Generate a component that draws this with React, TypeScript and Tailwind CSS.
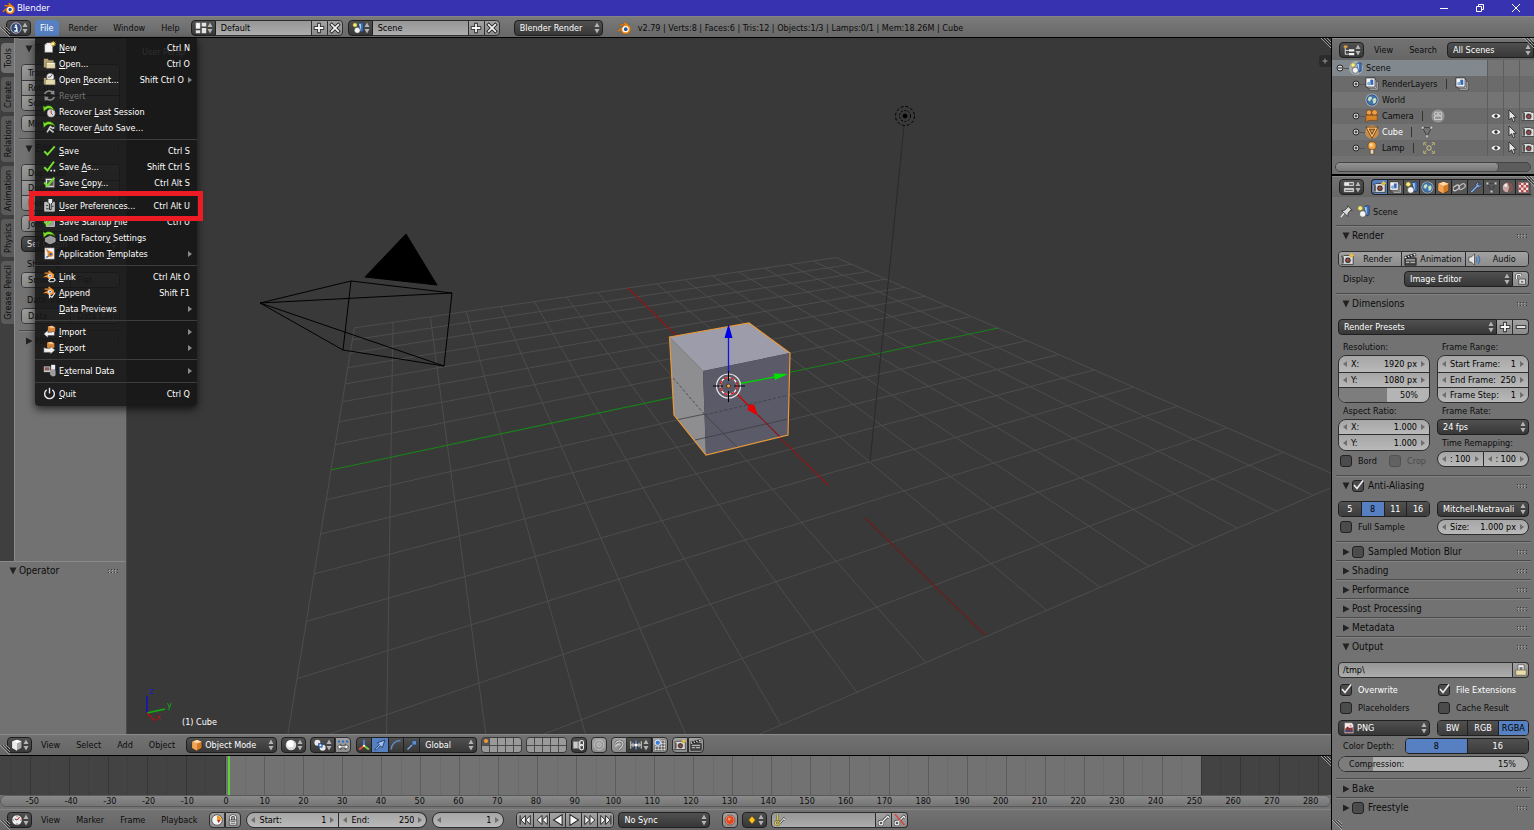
import React, { useState } from 'react';
import clsx from 'clsx';

const iconShapes = {
    info: (
        <>
            <circle cx="8" cy="8" r="7" fill="#2f4a78" stroke="#cfd6e2" strokeWidth="1" />
            <circle cx="8" cy="4.6" r="1.4" fill="#fff" />
            <path d="M6 7h3v5h1.2M5.8 12h4.6" stroke="#fff" strokeWidth="1.8" fill="none" />
        </>
    ),
    layout: (
        <>
            <path d="M1 1h6v8H1zM1 11h6v4H1zM9 1h6v5H9zM9 8h6v7H9z" fill="#e4e4e4" />
            <path d="M2 2h4v6H2z" fill="#f8f8f8" />
        </>
    ),
    scene: (
        <>
            <circle cx="4" cy="4" r="2.8" fill="#f7ef7a" stroke="#8a8430" strokeWidth=".6" />
            <path d="M9 2l4-1.4 2 1V12l-3 1.6z" fill="#3c74c4" stroke="#16294a" strokeWidth=".7" />
            <path d="M9 2l3 1v10" fill="#a9caf2" />
            <circle cx="7" cy="11" r="4" fill="#f2f2f2" stroke="#333" strokeWidth=".7" />
        </>
    ),
    blender: (
        <>
            <path d="M.5 11.2L8 5.4H3V3.8h6L7.4 2.2 9 1l6 5.2c1.4 2.4 1 5.4-1 7.2-2.4 2.2-6.6 2-8.6-.6-.6-.8-.9-1.8-.9-2.8L1.6 12.6z" fill="#f08a1c" stroke="#7a3d04" strokeWidth=".4" />
            <circle cx="9.8" cy="9.3" r="3.6" fill="#fff" />
            <circle cx="10" cy="9.3" r="2.1" fill="#205493" />
        </>
    ),
    newFile: (
        <>
            <path d="M2 5l3-3h7v12H2z" fill="#f4f4f4" stroke="#444" strokeWidth=".6" />
            <path d="M2 5h3V2" fill="#c8c8c8" />
            <path d="M12.5 0v7M9 3.5h7M10 1l5 5M15 1l-5 5" stroke="#e7b732" strokeWidth="1.2" />
            <circle cx="12.5" cy="3.5" r="1.6" fill="#fff6b0" />
        </>
    ),
    folder: (
        <>
            <path d="M1 2h5l1 2h6v4H4v5H1z" fill="#b3a173" />
            <path d="M4 7h11v7H4z" fill="#e5d9b0" stroke="#6c6040" strokeWidth=".5" />
            <path d="M5 8h9" stroke="#fffbe5" />
        </>
    ),
    recent: (
        <>
            <path d="M1 6h3v8H1z" fill="#b3a173" />
            <circle cx="9" cy="5" r="4.6" fill="#eee" stroke="#555" strokeWidth=".6" />
            <path d="M9 5l2-3M9 5H6" stroke="#333" />
            <path d="M3 8h12v6.5H3z" fill="#e5d9b0" stroke="#6c6040" strokeWidth=".5" />
        </>
    ),
    revert: (
        <path d="M2 6c2-4 8-5 11-1V2M13 5.4H9.5M14 10c-2 4-8 5-11 1v3M3 10.6h3.5" stroke="#8b8b8b" strokeWidth="2" fill="none" />
    ),
    recoverSession: (
        <>
            <circle cx="10" cy="10" r="5" fill="#d9d9d9" stroke="#444" strokeWidth=".6" />
            <path d="M10 10V6.5M10 10l2 2" stroke="#a33" strokeWidth="1.2" />
            <path d="M0 1l1 7 2.5-2.2c3-2.8 7-1.800 10 1.200-1-6-7-8-11-4.500z" fill="#7fe02b" stroke="#2c7000" strokeWidth=".6" />
        </>
    ),
    recoverAuto: (
        <>
            <path d="M5 14l4-7 3 2 2-1M8 10l5 4" stroke="#cfcfcf" strokeWidth="2" fill="none" />
            <path d="M0 1l1 7 2.5-2.2c3-2.8 8-1.8 11.5 1.2-2-6-8.500-8-12.500-4.500z" fill="#7fe02b" stroke="#2c7000" strokeWidth=".6" />
        </>
    ),
    check: <path d="M1.5 9l4 4L14.5 3" stroke="#74df2f" strokeWidth="2.4" fill="none" />,
    checkDots: (
        <>
            <path d="M1.5 9l4 4L13.5 2" stroke="#74df2f" strokeWidth="2.4" fill="none" />
            <path d="M9 12h2v2H9zM13 12h2v2h-2z" fill="#eee" />
        </>
    ),
    saveCopy: (
        <>
            <path d="M3 3h11v11H3z" fill="#ddd" stroke="#555" />
            <path d="M5 5h8v7H5z" fill="#555" />
            <path d="M1.5 8l4 4L14 2" stroke="#74df2f" strokeWidth="2.4" fill="none" />
        </>
    ),
    prefs: (
        <>
            <path d="M2 4h12v11H2z" fill="#b9b9b9" stroke="#eee" strokeWidth=".7" />
            <path d="M6 0v4l2 2v7h2V6l2-2V0" stroke="#222" strokeWidth="1.2" fill="#eee" />
            <path d="M4 8h2M4 12h3M11 9h2" stroke="#333" strokeWidth="1.2" />
        </>
    ),
    saveStartup: (
        <>
            <path d="M4 4h10v10H4z" fill="#999" stroke="#ddd" />
            <path d="M1.5 8l4 4L14 3" stroke="#74df2f" strokeWidth="2.4" fill="none" />
        </>
    ),
    factory: (
        <>
            <path d="M3 9l6-3 6 3v4l-6 3-6-3z" fill="#9a9a9a" stroke="#ddd" strokeWidth=".6" />
            <path d="M0 1l1 7 2.5-2.2c3-2.8 8-1.8 11.5 1.2-2-6-8.500-8-12.500-4.500z" fill="#7fe02b" stroke="#2c7000" strokeWidth=".6" />
        </>
    ),
    template: (
        <>
            <path d="M2 1h12v14H2z" fill="#f0f0f0" stroke="#555" strokeWidth=".6" />
            <path d="M4 3l4 3M5 6h4" stroke="#d67a26" strokeWidth="1.4" />
            <circle cx="9" cy="9" r="3.4" fill="#ef8a24" />
            <circle cx="9.3" cy="9" r="1.5" fill="#2b5fa8" />
            <path d="M4 13l3-2" stroke="#2b5fa8" strokeWidth="1.4" />
        </>
    ),
    link: (
        <>
            <path d="M0 9L7 4.5H2V3h6L6 1.5 7.500.5l6 4.700v4L8 12 5 9z" fill="#ef9434" />
            <circle cx="8.500" cy="7" r="2.200" fill="#fff" />
            <circle cx="8.700" cy="7" r="1.100" fill="#2b5fa8" />
            <path d="M7 13l2-2.500h5l1 2-2 2H8z" fill="none" stroke="#e5e5e5" strokeWidth="1.400" />
        </>
    ),
    append: (
        <>
            <path d="M0 9L7 4.500H2V3h6L6 1.500 7.500.5l6 4.700v4L8 12 5 9z" fill="#ef9434" />
            <circle cx="8.500" cy="7" r="2.200" fill="#fff" />
            <circle cx="8.700" cy="7" r="1.100" fill="#2b5fa8" />
            <path d="M8 11.500l3 2.500 4-6M8 9v6" fill="none" stroke="#e5e5e5" strokeWidth="1.500" />
        </>
    ),
    importFile: (
        <>
            <path d="M6 2l5-1 4 2v5l-5 2-4-2z" fill="#d98636" />
            <path d="M6 2l5-1 4 2-5 1z" fill="#f8c388" />
            <path d="M14 8v5H6v2.500L1 11l5-4.500V9h5V8z" fill="#f1f1f1" stroke="#444" strokeWidth=".6" />
        </>
    ),
    exportFile: (
        <>
            <path d="M5 2l5-1 4 2v5l-5 2-4-2z" fill="#d98636" />
            <path d="M5 2l5-1 4 2-5 1z" fill="#f8c388" />
            <path d="M1 8v6h8v2l6-5-6-4.500V9H4z" fill="#f1f1f1" stroke="#444" strokeWidth=".6" />
        </>
    ),
    external: (
        <>
            <path d="M1 3h8v7H1z" fill="#c9c9c9" />
            <path d="M2 4h6v4H2z" fill="#8a5a5a" />
            <path d="M10 1h5v6h-5z" fill="#eee" />
            <path d="M9 8l3-2 3 2v6l-3 1-3-2z" fill="#9c9c9c" stroke="#ddd" strokeWidth=".5" />
        </>
    ),
    power: (
        <>
            <path d="M4.500 3.500a6 6 0 1 0 7 0" stroke="#e8e8e8" strokeWidth="1.700" fill="none" />
            <path d="M8 1v7" stroke="#e8e8e8" strokeWidth="1.700" />
        </>
    ),
    outliner: (
        <>
            <path d="M1 2h5v3H1z" fill="#e9a33c" />
            <path d="M3 5v9M3 8.500h5M3 13.500h5" stroke="#e4e4e4" strokeWidth="1.200" fill="none" />
            <path d="M8 7h7v3H8zM8 12h7v3H8z" fill="#f1f1f1" />
        </>
    ),
    properties: (
        <>
            <path d="M1 1h14v6H1zM1 9h14v6H1z" fill="#e8e8e8" stroke="#333" strokeWidth=".8" />
            <path d="M8 3h5.500v2H8zM3 11.500h10v1.500H3z" fill="#444" />
        </>
    ),
    renderLayers: (
        <>
            <path d="M5 5h10v10H5z" fill="#bbb" stroke="#333" strokeWidth=".7" />
            <path d="M3 3h10v10H3z" fill="#ddd" stroke="#333" strokeWidth=".7" />
            <path d="M1 1h10.500v10.500H1z" fill="#f7f7f7" stroke="#222" strokeWidth=".9" />
            <path d="M6 3h3.500v6H6z" fill="#3569b8" />
            <circle cx="4.600" cy="7.500" r="2.200" fill="#86abd9" />
        </>
    ),
    world: (
        <>
            <circle cx="8" cy="8" r="7.400" fill="#a5b3c4" />
            <circle cx="8" cy="8" r="6" fill="#3f74b0" stroke="#203a5c" strokeWidth=".7" />
            <path d="M4 5c2-2 4-1 4 1S6 7 6 9 4 8 3 8zM10 6c2-1 3 0 3 2s-1 4-3 4 0-2-1-3 0-2 1-3z" fill="#c5dfc0" />
        </>
    ),
    camera: (
        <>
            <circle cx="4.500" cy="4" r="3" fill="#f0a04b" stroke="#6b3b0b" strokeWidth=".7" />
            <circle cx="11" cy="4" r="3.200" fill="#f0a04b" stroke="#6b3b0b" strokeWidth=".7" />
            <path d="M4 7h10v6H4l-3 2V7z" fill="#d98328" stroke="#6b3b0b" strokeWidth=".7" />
        </>
    ),
    cameraData: (
        <>
            <circle cx="8" cy="8" r="7.500" fill="#949494" />
            <circle cx="6" cy="5.500" r="2" fill="none" stroke="#d5d5d5" />
            <circle cx="10.500" cy="5.500" r="2" fill="none" stroke="#d5d5d5" />
            <path d="M4 8h8v4H4z" fill="none" stroke="#d5d5d5" />
        </>
    ),
    mesh: (
        <>
            <circle cx="8" cy="8" r="7.800" fill="#c98f4e" />
            <path d="M3 3.500h10L8 13z" fill="none" stroke="#5e3206" strokeWidth="3" />
            <path d="M3 3.500h10L8 13z" fill="none" stroke="#ffc27a" strokeWidth="1.400" />
        </>
    ),
    meshData: (
        <>
            <path d="M3 3h10L8 13z" fill="none" stroke="#3c3c3c" strokeWidth="1" />
            <path d="M1.500 1.500h3v3h-3zM11.500 1.500h3v3h-3zM6.500 11.500h3v3h-3z" fill="#cfcfcf" stroke="#444" strokeWidth=".5" />
        </>
    ),
    lamp: (
        <>
            <circle cx="8" cy="5.500" r="4.600" fill="#f5a545" stroke="#6b3b0b" strokeWidth=".7" />
            <path d="M6 9.500h4V15H6z" fill="#e8d7bd" stroke="#5a3c18" strokeWidth=".7" />
            <circle cx="7" cy="4.500" r="1.800" fill="#ffe0b0" />
        </>
    ),
    lampData: (
        <>
            <circle cx="8" cy="8" r="2.500" fill="none" stroke="#d9d08a" />
            <path d="M2 5V2h3M11 2h3v3M14 11v3h-3M5 14H2v-3M3 3l2 2M13 3l-2 2M3 13l2-2M13 13l-2-2" stroke="#c9c07a" fill="none" strokeWidth="1" />
        </>
    ),
    eye: (
        <>
            <path d="M0 8c3-6 13-6 16 0-3 6-13 6-16 0z" fill="#f2f2f2" stroke="#333" strokeWidth=".9" />
            <circle cx="8" cy="7.800" r="2.800" fill="#333" />
        </>
    ),
    pointer: <path d="M4 0v13l3.500-2.600 2 5 2.300-1-2-4.700h4z" fill="#e6e6e6" stroke="#222" strokeWidth="1.100" />,
    still: (
        <>
            <path d="M0 3h3l1-1h7l1 1h4v11H0z" fill="#dedede" stroke="#222" strokeWidth=".9" />
            <path d="M1 4h3v9H1z" fill="#555" />
            <circle cx="9" cy="8.500" r="4.200" fill="#3a3a3a" stroke="#fff" strokeWidth=".7" />
            <circle cx="9" cy="8.500" r="2" fill="#b84040" />
        </>
    ),
    stillSpark: (
        <>
            <path d="M0 4h3l1-1h6l1 1h4v10H0z" fill="#dedede" stroke="#222" strokeWidth=".9" />
            <path d="M1 5h2.500v8H1z" fill="#555" />
            <circle cx="8.500" cy="9" r="4" fill="#3a3a3a" stroke="#fff" strokeWidth=".7" />
            <circle cx="8.500" cy="9" r="1.800" fill="#b84040" />
            <path d="M13 0v6M10 3h6M11 1l4 4M15 1l-4 4" stroke="#f2c23a" strokeWidth="1.100" />
        </>
    ),
    clapper: (
        <>
            <path d="M1 6h14v9H1z" fill="#4a4a4a" stroke="#111" strokeWidth=".8" />
            <path d="M0 4.500L14 .5l.8 2.600L1 7z" fill="#eee" stroke="#111" strokeWidth=".7" />
            <path d="M3 3.700L5 6M6.500 2.700L8.500 5M10 1.700L12 4" stroke="#111" strokeWidth="1.700" />
            <path d="M2.500 8.500h11M2.500 11.500h4M8 11.500h5.500" stroke="#ddd" strokeWidth="1.100" />
        </>
    ),
    speaker: (
        <>
            <path d="M1 5h3l4-4v14l-4-4H1z" fill="#e6e6e6" stroke="#333" strokeWidth=".8" />
            <path d="M10 5c1.400 2 1.400 4 0 6M12.500 3c2.300 3 2.300 7 0 10" stroke="#3f74c0" strokeWidth="1.500" fill="none" />
        </>
    ),
    cubeOrange: (
        <>
            <path d="M8 1l6.500 2.500V12L8 15.500 1.500 12V3.500z" fill="#d17b28" stroke="#4c2905" strokeWidth=".8" />
            <path d="M8 1l6.500 2.500L8 6 1.500 3.500z" fill="#ffd9a6" />
            <path d="M1.500 3.500L8 6v9.500L1.500 12z" fill="#f0a557" />
        </>
    ),
    cubeWhite: (
        <>
            <path d="M8 1l6.500 2v9L8 15.500 1.500 12V3z" fill="#a9a9a9" stroke="#222" strokeWidth=".8" />
            <path d="M8 1l6.500 2L8 5.500 1.500 3z" fill="#fff" />
            <path d="M1.500 3L8 5.500v10L1.500 12z" fill="#ececec" />
        </>
    ),
    chain: (
        <>
            <rect x="0" y="6" width="8.500" height="5" rx="2.500" fill="none" stroke="#ccc" strokeWidth="1.500" transform="rotate(-35 4 9)" />
            <rect x="7" y="4.500" width="8.500" height="5" rx="2.500" fill="none" stroke="#bbb" strokeWidth="1.500" transform="rotate(-35 11 7)" />
        </>
    ),
    wrench: <path d="M1.500 13l7-7C8 3 10 1 13 1.500L11 4l1.500 1.500L15 3.500c.6 3-2 5-4.500 4.300l-7 7z" fill="#84a9dc" stroke="#20324f" strokeWidth=".8" />,
    material: (
        <>
            <circle cx="8" cy="8" r="6.500" fill="#c9a7a4" stroke="#333" strokeWidth=".7" />
            <path d="M8 1.500a6.500 6.500 0 0 1 0 13L10 8z" fill="#7c5552" />
            <circle cx="5.800" cy="5.500" r="1.800" fill="#fff" opacity=".8" />
        </>
    ),
    texture: (
        <>
            <path d="M1.500 1.500h13v13h-13z" fill="#f3dede" stroke="#333" strokeWidth=".8" />
            <path d="M2 2h3v3H2zM8 2h3v3H8zM5 5h3v3H5zM11 5h3v3h-3zM2 8h3v3H2zM8 8h3v3H8zM5 11h3v3H5zM11 11h3v3h-3z" fill="#b3474a" />
        </>
    ),
    pin: (
        <>
            <path d="M1 15l5-6" stroke="#eee" strokeWidth="1.500" />
            <path d="M2 7l7.500 7 .5-4 3-3.500 2 .2L9.500 1 9.300 3 6 6.300z" fill="#dadada" stroke="#222" strokeWidth=".9" />
        </>
    ),
    unlock: (
        <>
            <path d="M2 8V4c0-3 6-3 6 0v1" stroke="#333" strokeWidth="3" fill="none" />
            <path d="M2 8V4c0-3 6-3 6 0v1" stroke="#f4f4f4" strokeWidth="1.700" fill="none" />
            <path d="M5 8h9v7H5z" fill="#d9d9d9" stroke="#333" strokeWidth=".9" />
            <path d="M8 11h3v1.500H8z" fill="#444" />
        </>
    ),
    lock: (
        <>
            <path d="M4.500 8V5c0-4 7-4 7 0v3" stroke="#333" strokeWidth="3" fill="none" />
            <path d="M4.500 8V5c0-4 7-4 7 0v3" stroke="#f4f4f4" strokeWidth="1.500" fill="none" />
            <path d="M3 8h10v7H3z" fill="#d9d9d9" stroke="#333" strokeWidth=".9" />
            <path d="M5 10h6M5 12.500h6" stroke="#555" />
        </>
    ),
    browse: (
        <>
            <path d="M4 1h8v8H4z" fill="#f5f5f5" stroke="#444" strokeWidth=".8" />
            <path d="M6 4h4v4H6z" fill="#777" />
            <path d="M1 8h14v7H1z" fill="#e8dcae" stroke="#5e5432" strokeWidth=".8" />
        </>
    ),
    image: (
        <>
            <path d="M2 1h10l2 3v11H2z" fill="#f4e8e8" stroke="#555" strokeWidth=".6" />
            <path d="M3 9l3-3 3 2 4-1v7H3z" fill="#8d3434" />
            <path d="M3 11h10v2H3z" fill="#3b4c80" />
            <circle cx="10" cy="5" r="1.500" fill="#d99" />
        </>
    ),
    sphere: (
        <>
            <circle cx="8" cy="8" r="7" fill="#d9d9d9" />
            <circle cx="7" cy="6.500" r="4.500" fill="#fff" />
        </>
    ),
    pivot: (
        <>
            <circle cx="4.500" cy="5" r="4" fill="#e8e8e8" />
            <circle cx="11.500" cy="11.500" r="4" fill="#e8e8e8" />
            <path d="M6 6h5v5H6z" fill="#4d8ce0" stroke="#163a6d" strokeWidth=".8" />
            <path d="M7.500 7.500h2v2h-2z" fill="#fff" />
        </>
    ),
    centers: (
        <>
            <path d="M1 2h3v2.500H1zM6.500 2h3v2.500h-3zM12 2h3v2.500h-3z" fill="#2f6fc8" />
            <path d="M.5 10.500L5 6.800v2.400h6V6.800l4.500 3.700-4.500 3.700v-2.400H5v2.400z" fill="#fff" stroke="#222" strokeWidth=".9" />
        </>
    ),
    axes: (
        <>
            <path d="M8 9V1" stroke="#4d8cf0" strokeWidth="2" />
            <path d="M8 9l-6.500 5" stroke="#e84b3c" strokeWidth="2.400" />
            <path d="M8 9l6.500 5" stroke="#7bd23a" strokeWidth="2.400" />
            <circle cx="8" cy="9" r="1.400" fill="#fff" />
        </>
    ),
    arrow: <path d="M1 14L7 7.500 4.500 5 14.500 1.500 11 11.500 8.500 9 3 15z" fill="#9fc3f5" stroke="#12284a" strokeWidth="1" />,
    arc: <path d="M1.500 14C2 7 7 2 14 2" stroke="#5f8cc6" strokeWidth="2" fill="none" />,
    scaleTool: (
        <>
            <path d="M2 14l7-7" stroke="#7fa6dc" strokeWidth="2" />
            <path d="M8 2h6v6H8z" fill="#5f8cc6" stroke="#1c3457" strokeWidth=".8" />
        </>
    ),
    layerLock: (
        <>
            <path d="M0 3h10v10H0z" fill="#8f8f8f" />
            <path d="M1 4h5v8H1z" fill="#c9c9c9" />
            <rect x="9" y="2" width="5" height="7" rx="2.500" fill="none" stroke="#eee" strokeWidth="1.400" />
            <rect x="9" y="7.500" width="5" height="7" rx="2.500" fill="none" stroke="#eee" strokeWidth="1.400" />
        </>
    ),
    proportional: (
        <>
            <circle cx="8" cy="8" r="6.500" fill="none" stroke="#c6c6c6" strokeWidth="1.200" />
            <circle cx="8" cy="8" r="3" fill="#a9a9a9" stroke="#c6c6c6" />
        </>
    ),
    magnet: (
        <>
            <path d="M3 6c4-6 12-3 10 2-.6 2-3 4-5 6" stroke="#5a5a5a" strokeWidth="3.400" fill="none" />
            <path d="M3 6c4-6 12-3 10 2-.6 2-3 4-5 6M3 10c4-4 6-4 6-2" stroke="#cdcdcd" strokeWidth="1.800" fill="none" />
        </>
    ),
    increment: (
        <>
            <path d="M1 3v10M4 5v6M12 5v6M15 3v10M1 8h14" stroke="#d8d8d8" strokeWidth="1.300" />
            <path d="M7 2h2v12H7z" fill="#4d8ce0" />
            <circle cx="8" cy="8" r="2" fill="#fff" />
        </>
    ),
    gridSnap: (
        <>
            <path d="M10 2v13M14 2v13M6 10v5M2 10v5M1 10h14M1 14h14M9 6h6M9 2h6" stroke="#333" strokeWidth="1.800" />
            <path d="M10 2v13M14 2v13M6 10v5M2 10v5M1 10h14M1 14h14M9 6h6M9 2h6" stroke="#fff" strokeWidth=".8" />
            <circle cx="5" cy="5" r="3.600" fill="#3f7fdc" stroke="#fff" strokeWidth="1.200" />
        </>
    ),
    clock: (
        <>
            <circle cx="8" cy="8" r="7" fill="#ececec" stroke="#222" strokeWidth=".8" />
            <path d="M8 8l3.500-4" stroke="#c22" strokeWidth="1.400" />
            <path d="M8 8L5 6.500M8 2v1.500M8 12.500V14M2 8h1.500M12.500 8H14" stroke="#333" strokeWidth="1.200" />
        </>
    ),
    clockOrange: (
        <>
            <circle cx="8" cy="8" r="7" fill="#f4f4f4" stroke="#222" strokeWidth=".8" />
            <path d="M8 8V2a6 6 0 0 1 6 6z" fill="#f29a25" />
            <path d="M8 8h5l-3 4z" fill="#a33" />
        </>
    ),
    record: (
        <>
            <circle cx="8" cy="8" r="6.500" fill="#d8d8d8" stroke="#8a2c10" strokeWidth="1" />
            <circle cx="8" cy="8" r="5.200" fill="#e8441a" />
            <circle cx="7" cy="6.500" r="2" fill="#ff9a70" />
        </>
    ),
    keyframe: <path d="M8 2.500L12.500 8 8 13.500 3.500 8z" fill="#ffc31f" stroke="#5c4400" strokeWidth=".9" />,
    keyingSet: (
        <>
            <path d="M5 1v8" stroke="#5c5218" strokeWidth="3" />
            <path d="M5 1v8" stroke="#e2d056" strokeWidth="1.700" />
            <circle cx="4.500" cy="12" r="2.600" fill="none" stroke="#5c5218" strokeWidth="2.800" />
            <circle cx="4.500" cy="12" r="2.600" fill="none" stroke="#e2d056" strokeWidth="1.500" />
            <path d="M8 12l5-6 2 2" stroke="#333" strokeWidth="2.800" fill="none" />
            <path d="M8 12l5-6 2 2" stroke="#eee" strokeWidth="1.500" fill="none" />
        </>
    ),
    key: (
        <>
            <path d="M6 10l7-7 2 2" stroke="#333" strokeWidth="3.600" fill="none" />
            <circle cx="4" cy="12" r="2.600" fill="none" stroke="#333" strokeWidth="3.200" />
            <circle cx="4" cy="12" r="2.600" fill="none" stroke="#f4f4f4" strokeWidth="1.700" />
            <path d="M6 10l7-7 2 2" stroke="#f4f4f4" strokeWidth="1.800" fill="none" />
        </>
    ),
    keyRemove: (
        <>
            <path d="M6 10l7-7 2 2" stroke="#333" strokeWidth="3.600" fill="none" />
            <circle cx="4" cy="12" r="2.600" fill="none" stroke="#333" strokeWidth="3.200" />
            <circle cx="4" cy="12" r="2.600" fill="none" stroke="#f4f4f4" strokeWidth="1.700" />
            <path d="M6 10l7-7 2 2" stroke="#f4f4f4" strokeWidth="1.800" fill="none" />
            <path d="M1 0l13 15" stroke="#d9463e" strokeWidth="2" />
        </>
    ),
    plus: (
        <>
            <path d="M8 1v14M1 8h14" stroke="#222" strokeWidth="4.600" />
            <path d="M8 2.200v11.600M2.200 8h11.600" stroke="#f6f6f6" strokeWidth="2.400" />
        </>
    ),
    minus: (
        <>
            <path d="M1 8h14" stroke="#222" strokeWidth="4.600" />
            <path d="M2.200 8h11.600" stroke="#f6f6f6" strokeWidth="2.400" />
        </>
    ),
    cross: (
        <>
            <path d="M2 2l12 12M14 2L2 14" stroke="#222" strokeWidth="4.600" />
            <path d="M2.800 2.800l10.400 10.400M13.200 2.800L2.800 13.200" stroke="#f6f6f6" strokeWidth="2.200" />
        </>
    ),
    first: <path d="M1.500 2v12M8.500 2v12L2.500 8zM15 2v12L9 8z" fill="#f6f6f6" stroke="#222" strokeWidth="1.300" />,
    prevKey: <path d="M8 2v12L1.500 8zM15 2v12L8.500 8z" fill="#f6f6f6" stroke="#222" strokeWidth="1.300" />,
    playBack: <path d="M13.500 .8v14.400L2 8z" fill="#f6f6f6" stroke="#222" strokeWidth="1.400" />,
    play: <path d="M2.500 .8v14.400L14 8z" fill="#f6f6f6" stroke="#222" strokeWidth="1.400" />,
    nextKey: <path d="M8 2v12L14.500 8zM1 2v12L7.500 8z" fill="#f6f6f6" stroke="#222" strokeWidth="1.300" />,
    last: <path d="M14.500 2v12M7.500 2v12L13.500 8zM1 2v12L7 8z" fill="#f6f6f6" stroke="#222" strokeWidth="1.300" />,
};

type IconName = keyof typeof iconShapes;

const Icon = ({ name, className = 'size-3' }: { name: IconName; className?: string }) => (
    <svg viewBox="0 0 16 16" className={clsx('shrink-0', className)} aria-hidden="true">
        {iconShapes[name]}
    </svg>
);

const UpDown = ({ className }: { className?: string }) => (
    <svg viewBox="0 0 6 12" className={clsx('h-3 w-1.5 shrink-0', className)} aria-hidden="true">
        <path d="M3 .5l2.500 4.500h-5zM3 11.500l2.500-4.500h-5z" fill="#b4b4b4" />
    </svg>
);

const Triangle = ({ open }: { open: boolean }) => (
    <svg viewBox="0 0 8 8" className="size-2 shrink-0" aria-hidden="true">
        <path d={open ? 'M.5.5h7L4 7.500z' : 'M1 .5v7L7.500 4z'} fill="#222" />
    </svg>
);

const Dots = () => (
    <svg viewBox="0 0 10 4" className="h-1 w-2.5 shrink-0" aria-hidden="true">
        <path d="M0 .5h10M0 3.500h10" stroke="#3a3a3a" strokeDasharray="1 2" />
        <path d="M1 1.500h9M1 3.500h9" stroke="#aaa" strokeDasharray="1 2" />
    </svg>
);

// Striped handle in the corner of an editor area
const Corner = ({ className }: { className: string }) => (
    <svg viewBox="0 0 10 10" className={clsx('pointer-events-none absolute size-2.5', className)} aria-hidden="true">
        <path d="M0 0l10 10M3 0l7 7M6 0l4 4" stroke="#b5b5b5" strokeWidth=".8" />
        <path d="M1.500 0L10 8.500M4.500 0L10 5.500" stroke="#222" strokeWidth=".8" />
    </svg>
);

const darkBox = 'border border-[#1f1f1f] bg-linear-to-b from-[#505050] to-[#373737] text-white';
const lightBox = 'border border-[#2e2e2e] bg-linear-to-b from-[#a2a2a2] to-[#8c8c8c] text-black';
const fieldBox = 'border border-[#2e2e2e] bg-linear-to-b from-[#969696] to-[#adadad] text-black';

const EditorButton = ({ icon, label, className }: { icon: IconName; label: string; className?: string }) => (
    <button aria-label={label} className={clsx('flex h-4 w-[25px] shrink-0 items-center justify-between pr-0.5 pl-[3px]', darkBox, className ?? 'rounded')}>
        <Icon name={icon} />
        <UpDown />
    </button>
);

const IconButton = ({ icon, label, className }: { icon: IconName; label: string; className: string }) => (
    <button aria-label={label} className={clsx('flex h-4 w-4 shrink-0 items-center justify-center', className)}>
        <Icon name={icon} />
    </button>
);

interface SelectProps {
    label: string;
    value: string;
    icon?: IconName;
    className?: string;
    rounded?: string;
}

const Select = ({ label, value, icon, className, rounded = 'rounded' }: SelectProps) => (
    <div className={clsx('relative flex h-4 items-center', darkBox, rounded, className)}>
        {icon && <Icon name={icon} className="pointer-events-none absolute left-1 size-3" />}
        <select aria-label={label} className={clsx('h-full w-full appearance-none bg-transparent pr-2 outline-none', icon ? 'pl-[18px]' : 'pl-[5px]')}>
            <option>{value}</option>
        </select>
        <UpDown className="pointer-events-none absolute right-0.5" />
    </div>
);

interface NumberFieldProps {
    label: string;
    value: string;
    className?: string;
    hideLabel?: boolean;
}

const NumberField = ({ label, value, className = 'rounded-full border', hideLabel }: NumberFieldProps) => {
    const [text, setText] = useState(value);
    return (
        <label className={clsx('flex h-4 min-w-0 items-center border-[#2e2e2e] bg-linear-to-b from-[#a6a6a6] to-[#b9b9b9] px-1 text-black', className)}>
            <svg viewBox="0 0 4 6" className="h-1.5 w-1 shrink-0" aria-hidden="true">
                <path d="M4 0v6L0 3z" fill="#6e6e6e" />
            </svg>
            {!hideLabel && <span className="ml-1 whitespace-nowrap">{label}</span>}
            <input aria-label={label} value={text} onChange={e => setText(e.target.value)} className="mr-1 w-0 min-w-0 flex-1 bg-transparent text-right outline-none" />
            <svg viewBox="0 0 4 6" className="h-1.5 w-1 shrink-0" aria-hidden="true">
                <path d="M0 0v6l4-3z" fill="#6e6e6e" />
            </svg>
        </label>
    );
};

const Tick = ({ label, checked = false, hideLabel, disabled }: { label: string; checked?: boolean; hideLabel?: boolean; disabled?: boolean }) => (
    <label className={clsx('relative flex h-4 items-center gap-1.5', disabled && 'opacity-40', checked && !hideLabel && 'text-white')}>
        <input type="checkbox" aria-label={label} defaultChecked={checked} disabled={disabled} className="peer size-3 shrink-0 appearance-none rounded-[3px] border border-[#222] bg-[#4b4b4b]" />
        <svg viewBox="0 0 12 12" className="pointer-events-none absolute left-0 hidden size-3 overflow-visible peer-checked:block" aria-hidden="true">
            <path d="M2 5l3 3.500L11 .5" stroke="#eee" strokeWidth="1.600" fill="none" />
        </svg>
        {!hideLabel && <span className="whitespace-nowrap">{label}</span>}
    </label>
);

const Segments = ({ items, active, className }: { items: string[]; active: string; className?: string }) => {
    const [current, setCurrent] = useState(active);
    return (
        <div className={clsx('flex h-4 overflow-hidden rounded border border-[#1f1f1f]', className)}>
            {items.map(item => (
                <button
                    key={item}
                    onClick={() => setCurrent(item)}
                    className={clsx(
                        'flex flex-1 items-center justify-center border-l border-[#1f1f1f] first:border-l-0',
                        item === current ? 'bg-[#5680c2] text-black' : 'bg-linear-to-b from-[#505050] to-[#3c3c3c] text-white'
                    )}
                >
                    {item}
                </button>
            ))}
        </div>
    );
};

interface PanelProps {
    title: string;
    open?: boolean;
    checked?: boolean;
    children?: React.ReactNode;
}

const Panel = ({ title, open = false, checked, children }: PanelProps) => (
    <section className="border-t border-[#4a4a4a]">
        <div className="flex h-[18px] items-center gap-0.5 border-t border-[#828282] pr-1 pl-1.5 text-[10px]">
            <Triangle open={open} />
            {checked !== undefined && <Tick label={title} checked={checked} hideLabel />}
            <h2 className={clsx('flex-1 whitespace-nowrap', checked !== undefined && 'ml-0.5')}>{title}</h2>
            <Dots />
        </div>
        {open && <div className="flex flex-col px-0.5 pt-[7px] pb-1.5">{children}</div>}
    </section>
);

const menuGroups: { icon?: IconName; label: string; key: number; shortcut?: string; sub?: boolean; disabled?: boolean; marked?: boolean }[][] = [
    [
        { icon: 'newFile', label: 'New', key: 0, shortcut: 'Ctrl N' },
        { icon: 'folder', label: 'Open...', key: 0, shortcut: 'Ctrl O' },
        { icon: 'recent', label: 'Open Recent...', key: 5, shortcut: 'Shift Ctrl O', sub: true },
        { icon: 'revert', label: 'Revert', key: 2, disabled: true },
        { icon: 'recoverSession', label: 'Recover Last Session', key: 8 },
        { icon: 'recoverAuto', label: 'Recover Auto Save...', key: 8 },
    ],
    [
        { icon: 'check', label: 'Save', key: 0, shortcut: 'Ctrl S' },
        { icon: 'checkDots', label: 'Save As...', key: 5, shortcut: 'Shift Ctrl S' },
        { icon: 'saveCopy', label: 'Save Copy...', key: 5, shortcut: 'Ctrl Alt S' },
    ],
    [
        { icon: 'prefs', label: 'User Preferences...', key: 0, shortcut: 'Ctrl Alt U', marked: true },
        { icon: 'saveStartup', label: 'Save Startup File', key: 13, shortcut: 'Ctrl U' },
        { icon: 'factory', label: 'Load Factory Settings', key: 11 },
        { icon: 'template', label: 'Application Templates', key: 12, sub: true },
    ],
    [
        { icon: 'link', label: 'Link', key: 0, shortcut: 'Ctrl Alt O' },
        { icon: 'append', label: 'Append', key: 0, shortcut: 'Shift F1' },
        { label: 'Data Previews', key: 0, sub: true },
    ],
    [
        { icon: 'importFile', label: 'Import', key: 0, sub: true },
        { icon: 'exportFile', label: 'Export', key: 0, sub: true },
    ],
    [{ icon: 'external', label: 'External Data', key: 1, sub: true }],
    [{ icon: 'power', label: 'Quit', key: 0, shortcut: 'Ctrl Q' }],
];

const FileMenu = () => (
    <div role="menu" className="absolute top-full left-0 z-20 mt-0.5 w-[162px] rounded-b bg-[#161616]/90 pt-0.5 pb-1 text-white shadow-[0_3px_8px_rgba(0,0,0,0.7)]">
        {menuGroups.map((group, i) => (
            <div key={i} className={clsx(i > 0 && 'mt-[3px] border-t border-[#3d3d3d] pt-[3px]')}>
                {group.map(item => (
                    <div key={item.label} className="relative">
                        <button role="menuitem" disabled={item.disabled} className={clsx('flex h-4 w-full items-center pr-[5px] pl-2 text-left whitespace-nowrap', item.disabled && 'text-[#777]')}>
                            {item.icon ? <Icon name={item.icon} className="size-[13px]" /> : <span className="w-[13px]" />}
                            <span className="ml-[3px] flex-1">
                                {item.label.slice(0, item.key)}
                                <span className="underline underline-offset-1">{item.label[item.key]}</span>
                                {item.label.slice(item.key + 1)}
                            </span>
                            {item.shortcut && <span className={clsx(!item.sub && 'mr-0.5')}>{item.shortcut}</span>}
                            {item.sub && (
                                <svg viewBox="0 0 4 6" className="ml-1 h-1.5 w-1" aria-hidden="true">
                                    <path d="M0 0v6l4-3z" fill="#8a8a8a" />
                                </svg>
                            )}
                        </button>
                        {item.marked && <div className="pointer-events-none absolute -inset-x-[6px] -inset-y-[7px] z-10 border-5 border-[#ed1c24]" />}
                    </div>
                ))}
            </div>
        ))}
    </div>
);

const InfoHeader = () => (
    <header className="relative flex h-[22px] shrink-0 items-center border-t border-b border-t-[#858585] border-b-black bg-linear-to-b from-[#7a7a7a] to-[#686868] pt-px pl-1.5">
        <Corner className="bottom-0 left-0" />
        <EditorButton icon="info" label="Editor type: Info" />
        <nav className="ml-1 flex h-4">
            <div className="relative mr-0.5">
                <button className="h-4 rounded-t-sm bg-[#5680c2] px-[5px] text-white">File</button>
                <FileMenu />
            </div>
            {['Render', 'Window', 'Help'].map(item => (
                <button key={item} className="px-2">{item}</button>
            ))}
        </nav>
        <div className="ml-[3px] flex">
            <EditorButton icon="layout" label="Browse screen layouts" className="rounded-l" />
            <input aria-label="Screen layout" defaultValue="Default" className={clsx('h-4 w-[95px] border-x-0! px-[5px] outline-none', fieldBox)} />
            <IconButton icon="plus" label="Add screen layout" className={clsx('border-r-0!', lightBox)} />
            <IconButton icon="cross" label="Delete screen layout" className={clsx('rounded-r', lightBox)} />
        </div>
        <div className="ml-[5px] flex">
            <EditorButton icon="scene" label="Browse scenes" className="rounded-l" />
            <input aria-label="Scene name" defaultValue="Scene" className={clsx('h-4 w-[95px] border-x-0! px-[5px] outline-none', fieldBox)} />
            <IconButton icon="plus" label="Add scene" className={clsx('border-r-0!', lightBox)} />
            <IconButton icon="cross" label="Delete scene" className={clsx('rounded-r', lightBox)} />
        </div>
        <Select label="Render engine" value="Blender Render" className="ml-3.5 w-[89px]" />
        <Icon name="blender" className="ml-3.5 size-3.5" />
        <p className="ml-[7px] whitespace-nowrap">v2.79 | Verts:8 | Faces:6 | Tris:12 | Objects:1/3 | Lamps:0/1 | Mem:18.26M | Cube</p>
    </header>
);

const tabs = [
    { name: 'Tools', height: 'h-[30px]' },
    { name: 'Create', height: 'h-[35px]' },
    { name: 'Relations', height: 'h-[46px]' },
    { name: 'Animation', height: 'h-[49px]' },
    { name: 'Physics', height: 'h-[38px]' },
    { name: 'Grease Pencil', height: 'h-[63px]' },
];

const ButtonStack = ({ items }: { items: string[] }) => (
    <div className="flex flex-col overflow-hidden rounded border border-[#3a3a3a]">
        {items.map(item => (
            <button key={item} className="h-[15px] border-t border-[#3a3a3a] bg-linear-to-b from-[#9c9c9c] to-[#8a8a8a] pl-1.5 text-left first:border-t-0">{item}</button>
        ))}
    </div>
);

const ButtonPair = ({ items }: { items: string[] }) => (
    <div className="flex h-4 overflow-hidden rounded border border-[#3a3a3a]">
        {items.map(item => (
            <button key={item} className="flex-1 border-l border-[#3a3a3a] bg-linear-to-b from-[#9c9c9c] to-[#8a8a8a] pl-1.5 text-left first:border-l-0">{item}</button>
        ))}
    </div>
);

const ToolShelf = () => (
    <aside className="flex w-[127px] shrink-0 flex-col border-r border-[#4a4a4a] bg-[#727272]">
        <div className="flex min-h-0 flex-1">
            <div className="flex w-[15px] shrink-0 flex-col gap-1 border-r border-[#8a8a8a] bg-[#3f3f3f] pt-[5px] pl-px">
                {tabs.map((tab, i) => (
                    <button key={tab.name} className={clsx('flex w-full items-center justify-center rounded-l', tab.height, i === 0 ? 'bg-[#727272]' : 'bg-[#5a5a5a]')}>
                        <span className="rotate-180 whitespace-nowrap [writing-mode:vertical-rl]">{tab.name}</span>
                    </button>
                ))}
            </div>
            <div className="flex-1 px-1">
                <Panel title="Transform" open>
                    <ButtonStack items={['Translate', 'Rotate', 'Scale']} />
                    <div className="mt-1"><ButtonStack items={['Mirror']} /></div>
                </Panel>
                <Panel title="Edit" open>
                    <ButtonStack items={['Duplicate', 'Duplicate Linked', 'Delete']} />
                    <div className="mt-1"><ButtonStack items={['Join']} /></div>
                    <Select label="Set origin" value="Set Origin" className="mt-1" />
                    <p className="mt-1 flex h-4 items-center pl-1.5">Shading:</p>
                    <ButtonPair items={['Smooth', 'Flat']} />
                    <p className="mt-1 flex h-4 items-center pl-1.5">Data Transfer:</p>
                    <ButtonPair items={['Data', 'Data Layo']} />
                </Panel>
                <Panel title="History" />
            </div>
        </div>
        <div className="h-[173px] shrink-0 border-t border-[#8a8a8a]">
            <div className="flex h-[18px] items-center gap-0.5 pr-2 pl-[9px] text-[10px]">
                <Triangle open />
                <h2 className="flex-1">Operator</h2>
                <Dots />
            </div>
        </div>
    </aside>
);

// Perspective projection of a point on the ground plane
const project = (x: number, y: number) => {
    const w = 1 - 0.0549 * x + 0.02418 * y;
    return [(729 - 21.8 * x + 57.75 * y) / w, (385.4 - 3.64 * x + 0.76 * y) / w];
};

const steps = Array.from({ length: 17 }, (_, i) => i - 8);

const GroundLine = ({ from, to }: { from: [number, number]; to: [number, number] }) => {
    const [x1, y1] = project(...from);
    const [x2, y2] = project(...to);
    return <line x1={x1} y1={y1} x2={x2} y2={y2} />;
};

const Viewport = () => (
    <main className="relative min-w-0 flex-1 overflow-hidden bg-[#393939]">
        <svg viewBox="127 38 1204 696" preserveAspectRatio="xMidYMid slice" className="absolute inset-0 h-full w-full" role="img" aria-label="3D scene">
            <g stroke="#4d4d4d" strokeWidth="1">
                {steps.filter(s => s !== 0).map(s => (
                    <React.Fragment key={s}>
                        <GroundLine from={[s, -8]} to={[s, 8]} />
                        <GroundLine from={[-8, s]} to={[8, s]} />
                    </React.Fragment>
                ))}
            </g>
            <g fill="none">
                <path d="M331 470L998 328" stroke="#1a801a" strokeWidth="1.100" />
                <path d="M628 288L828 485" stroke="#8e1616" strokeWidth="1.200" />
                <path d="M865 518L985 635" stroke="#6e1c1c" strokeWidth="1.100" />
                <path d="M904 126L870 462" stroke="#2a2a2a" />
            </g>

            <g stroke="#000" fill="none">
                <circle cx="905" cy="116" r="9.500" strokeDasharray="3 2" />
                <circle cx="905" cy="116" r="5.500" strokeDasharray="2 1.500" />
                <circle cx="905" cy="116" r="2" fill="#000" />
                <path d="M351 281L452 293 444 366 343 350zM260 303L351 281M260 303L452 293M260 303L444 366M260 303L343 350" />
                <path d="M406 234L365 277 437 285z" fill="#000" />
            </g>

            <path d="M669.500 337L749 323 790 353 703 371z" fill="#9d9cab" />
            <path d="M669.500 337L703 371 706 455 674 415z" fill="#8e8e90" />
            <path d="M703 371L790 353 788 435 706 455z" fill="#5a5a68" />
            <g stroke="#3d3d42" strokeWidth=".8" fill="none">
                <path d="M673 378L705 415M705 415L789 395" strokeDasharray="3 2" />
                <path d="M705 415L738 448M676 420L705 414M695 440L788 419" />
            </g>
            <path d="M758 415L780 437" stroke="#8e1616" strokeWidth="1.200" />
            <path d="M669.500 337L749 323 790 353 788 435 706 455 674 415z" stroke="#e79a3c" strokeWidth="1.200" fill="none" />

            <path d="M728.500 375V338" stroke="#1414e0" strokeWidth="1.300" />
            <path d="M728.500 324L732.500 338h-8z" fill="#0000e6" />
            <path d="M740 383.500L775 377" stroke="#00d400" strokeWidth="1.300" />
            <path d="M788 374L773.500 373.500 775 380z" fill="#00e000" />
            <path d="M736 393L750 407" stroke="#d40000" strokeWidth="1.300" />
            <path d="M758 415.500L747.500 410 749 405 754 404.500z" fill="#e60000" />
            <circle cx="728.500" cy="386" r="12" stroke="#e8e8e8" strokeWidth="1.200" fill="none" />
            <circle cx="728.500" cy="386" r="8.500" stroke="#fff" strokeWidth="1.200" fill="none" />
            <circle cx="728.500" cy="386" r="8.500" stroke="#e01010" strokeWidth="1.200" strokeDasharray="4 3" fill="none" />
            <path d="M713 386h10M734 386h11M728.500 371v10M728.500 391v11" stroke="#000" />
            <circle cx="728.500" cy="386" r="2" fill="#f0a040" stroke="#222" strokeWidth=".7" />
        </svg>
        <span className="absolute top-2 left-[15px] text-white">User Persp</span>
        <svg viewBox="0 0 32 40" className="absolute bottom-2.5 left-[18px] h-10 w-8 text-[9px]" aria-label="Orientation axes">
            <path d="M2 12v17" stroke="#1010c0" strokeWidth="1.500" />
            <path d="M2 29l18-4" stroke="#10b010" strokeWidth="1.500" />
            <path d="M2 29l8 8" stroke="#b01010" strokeWidth="1.500" />
            <text x="4" y="10" fill="#1c1cc0">z</text>
            <text x="22" y="24" fill="#10b010">y</text>
            <text x="11" y="36" fill="#b01010">x</text>
        </svg>
        <span className="absolute bottom-1.5 left-[55px] text-white">(1) Cube</span>
        <button aria-label="Show properties region" className="absolute top-[17px] right-0 flex h-3 w-3 items-center justify-center rounded-l bg-[#2b2b2b]">
            <svg viewBox="0 0 8 8" className="size-2" aria-hidden="true">
                <path d="M4 1.500v5M1.500 4h5" stroke="#999" />
            </svg>
        </button>
        <Corner className="top-0 right-0" />
    </main>
);

const HeaderMenus = ({ items }: { items: string[] }) => (
    <nav className="ml-px flex h-4">
        {items.map(item => (
            <button key={item} className="px-2">{item}</button>
        ))}
    </nav>
);

const Layers = ({ active }: { active?: boolean }) => (
    <div className="grid h-4 w-[41px] shrink-0 grid-cols-5 grid-rows-2 gap-px overflow-hidden rounded border border-[#3a3a3a] bg-[#4a4a4a]">
        {Array.from({ length: 10 }, (_, i) => (
            <button key={i} aria-label={`Layer ${i + 1}`} className={clsx('flex items-center justify-center', active && i === 0 ? 'bg-[#555]' : 'bg-[#9a9a9a]')}>
                {active && i === 0 && <span className="size-1 rounded-full bg-[#f39a35]" />}
            </button>
        ))}
    </div>
);

const barStyle = 'relative flex shrink-0 items-center bg-linear-to-b from-[#727272] to-[#666]';

const ViewHeader = () => (
    <div className={clsx('h-[22px] border-t border-[#8a8a8a] border-b border-b-black pl-[7px]', barStyle)}>
        <Corner className="bottom-0 left-0" />
        <EditorButton icon="cubeWhite" label="Editor type: 3D View" />
        <HeaderMenus items={['View', 'Select', 'Add', 'Object']} />
        <Select label="Mode" value="Object Mode" icon="cubeOrange" className="ml-[3px] w-[91px]" />
        <div className="ml-1 flex"><EditorButton icon="sphere" label="Viewport shading" /></div>
        <div className="ml-1 flex">
            <EditorButton icon="pivot" label="Pivot point" className="rounded-l" />
            <IconButton icon="centers" label="Manipulate centre points" className={clsx('rounded-r', lightBox)} />
        </div>
        <div className="ml-[5px] flex">
            <IconButton icon="axes" label="Show manipulator" className={clsx('rounded-l', darkBox)} />
            <IconButton icon="arrow" label="Translate" className="border-y border-[#1f1f1f] bg-[#5680c2]" />
            <IconButton icon="arc" label="Rotate" className={darkBox} />
            <IconButton icon="scaleTool" label="Scale" className={clsx('border-l-0!', darkBox)} />
            <Select label="Transform orientation" value="Global" rounded="rounded-r" className="w-[57px] border-l-0!" />
        </div>
        <div className="ml-1 flex gap-1">
            <Layers active />
            <Layers />
            <IconButton icon="layerLock" label="Lock layers to scene" className={clsx('rounded', darkBox)} />
            <IconButton icon="proportional" label="Proportional editing" className={clsx('rounded', lightBox)} />
        </div>
        <div className="ml-1 flex">
            <IconButton icon="magnet" label="Snap" className={clsx('rounded-l', lightBox)} />
            <EditorButton icon="increment" label="Snap element" className="border-l-0!" />
            <IconButton icon="gridSnap" label="Absolute grid snap" className={clsx('rounded-r', lightBox)} />
        </div>
        <div className="ml-1 flex">
            <IconButton icon="stillSpark" label="Render view" className={clsx('rounded-l', lightBox)} />
            <IconButton icon="clapper" label="Render view animation" className={clsx('rounded-r', lightBox)} />
        </div>
    </div>
);

const frameLabels = Array.from({ length: 34 }, (_, i) => (i - 5) * 10);
const frameTicks = Array.from({ length: 68 }, (_, i) => (i - 11) * 5);
const frameX = (frame: number) => 225 + frame * 3.903;

const Timeline = () => (
    <div className="relative shrink-0 bg-[#727272]">
        <svg viewBox="0 0 1331 39" preserveAspectRatio="none" className="h-[39px] w-full" shapeRendering="crispEdges" role="img" aria-label="Timeline frames">
            <rect width="1331" height="39" fill="#727272" />
            <rect width={frameX(0)} height="39" fill="#434343" />
            <rect x={frameX(250)} width="200" height="39" fill="#434343" />
            {frameTicks.map(frame => {
                const dark = frame <= 0 || frame >= 250;
                const major = frame % 10 === 0;
                return <rect key={frame} x={frameX(frame)} width="1" height="39" fill={dark ? (major ? '#363636' : '#3e3e3e') : major ? '#5c5c5c' : '#6b6b6b'} />;
            })}
            <rect x="228" width="2" height="39" fill="#5ad534" />
        </svg>
        <div className="mb-0.5 flex h-3 items-center overflow-hidden rounded-full border border-[#5a5a5a] bg-linear-to-b from-[#8a8a8a] to-[#757575] pl-3">
            {frameLabels.map(frame => (
                <span key={frame} className="flex w-0 flex-1 justify-center">{frame}</span>
            ))}
        </div>
        <Corner className="top-0 right-0" />
    </div>
);

const transport: { icon: IconName; label: string }[] = [
    { icon: 'first', label: 'Jump to first frame' },
    { icon: 'prevKey', label: 'Previous keyframe' },
    { icon: 'playBack', label: 'Play reversed' },
    { icon: 'play', label: 'Play' },
    { icon: 'nextKey', label: 'Next keyframe' },
    { icon: 'last', label: 'Jump to last frame' },
];

const TimelineHeader = () => (
    <div className={clsx('h-[21px] border-t border-[#858585] pl-[7px]', barStyle)}>
        <Corner className="bottom-0 left-0" />
        <EditorButton icon="clock" label="Editor type: Timeline" />
        <HeaderMenus items={['View', 'Marker', 'Frame', 'Playback']} />
        <div className="ml-1 flex">
            <IconButton icon="clockOrange" label="Use preview range" className={clsx('rounded-l', lightBox)} />
            <IconButton icon="lock" label="Lock time cursor" className={clsx('rounded-r', lightBox)} />
        </div>
        <div className="ml-[5px] flex">
            <NumberField label="Start:" value="1" className="w-[93px] rounded-l-full border" />
            <NumberField label="End:" value="250" className="w-[88px] rounded-r-full border border-l-0" />
        </div>
        <NumberField label="Current frame" value="1" hideLabel className="ml-[5px] w-[72px] rounded-full border" />
        <div className="ml-3 flex overflow-hidden rounded border border-[#2e2e2e]">
            {transport.map(item => (
                <button key={item.label} aria-label={item.label} className="flex h-3.5 w-4 items-center justify-center border-l border-[#2e2e2e] bg-linear-to-b from-[#a2a2a2] to-[#8c8c8c] first:border-l-0">
                    <Icon name={item.icon} />
                </button>
            ))}
        </div>
        <Select label="Sync mode" value="No Sync" className="ml-1 w-[92px]" />
        <IconButton icon="record" label="Record keyframes" className={clsx('ml-3 rounded', lightBox)} />
        <div className="ml-1 flex"><EditorButton icon="keyframe" label="Keyframe type" /></div>
        <div className="ml-1 flex">
            <div className={clsx('flex h-4 w-[105px] items-center rounded-l pl-0.5', fieldBox)}>
                <Icon name="keyingSet" />
                <input aria-label="Active keying set" className="w-0 flex-1 bg-transparent outline-none" />
            </div>
            <IconButton icon="key" label="Insert keyframe" className={clsx('border-l-0!', lightBox)} />
            <IconButton icon="keyRemove" label="Delete keyframe" className={clsx('rounded-r border-l-0!', lightBox)} />
        </div>
    </div>
);

const outlinerRows: { label: string; icon: IconName; child?: boolean; toggle?: 'plus' | 'minus'; extra?: IconName; visible?: boolean; active?: boolean; row: string }[] = [
    { label: 'Scene', icon: 'scene', toggle: 'minus', row: 'bg-[#81888e]' },
    { label: 'RenderLayers', icon: 'renderLayers', child: true, toggle: 'plus', extra: 'renderLayers', row: 'bg-[#6b6b6b]' },
    { label: 'World', icon: 'world', child: true, row: 'bg-[#747474]' },
    { label: 'Camera', icon: 'camera', child: true, toggle: 'plus', extra: 'cameraData', visible: true, row: 'bg-[#6b6b6b]' },
    { label: 'Cube', icon: 'mesh', child: true, toggle: 'plus', extra: 'meshData', visible: true, active: true, row: 'bg-[#747474]' },
    { label: 'Lamp', icon: 'lamp', child: true, toggle: 'plus', extra: 'lampData', visible: true, row: 'bg-[#6b6b6b]' },
];

const Outliner = () => (
    <section className="relative shrink-0 border-b-2 border-black bg-[#727272]">
        <div className={clsx('h-[22px] border-t border-[#8a8a8a] pl-[7px]', barStyle)}>
            <EditorButton icon="outliner" label="Editor type: Outliner" />
            <nav className="flex h-4">
                <button className="px-2.5">View</button>
                <button className="px-1.5">Search</button>
            </nav>
            <Select label="Display mode" value="All Scenes" rounded="rounded-l" className="ml-1 min-w-0 flex-1" />
        </div>
        <ul className="pb-1.5">
            {outlinerRows.map(row => (
                <li key={row.label} className={clsx('flex h-4', row.row)}>
                    <div className={clsx('flex min-w-0 flex-1 items-center', row.child ? 'pl-5' : 'pl-1')}>
                        {row.toggle ? (
                            <button aria-label={`Toggle ${row.label}`} className="flex size-2">
                                <svg viewBox="0 0 8 8" className="size-2" aria-hidden="true">
                                    <circle cx="4" cy="4" r="3" fill="#ddd" stroke="#222" />
                                    <path d={row.toggle === 'plus' ? 'M4 2.500v3M2.500 4h3' : 'M2 4h4'} stroke="#222" />
                                </svg>
                            </button>
                        ) : (
                            <span className="w-2" />
                        )}
                        <span className={clsx('h-px w-[5px]', row.toggle && 'bg-[#555]')} />
                        <span className={clsx('flex size-3.5 items-center justify-center rounded-full', !row.child && 'bg-[#a5abb0]')}>
                            <Icon name={row.icon} className={row.child ? 'size-3.5' : 'size-3'} />
                        </span>
                        <span className={clsx('ml-[3px]', row.active && 'text-white')}>{row.label}</span>
                        {row.extra && (
                            <>
                                <span className="mx-2 h-2.5 w-px bg-[#333]" />
                                <Icon name={row.extra} className="size-3.5" />
                            </>
                        )}
                    </div>
                    <div className={clsx('flex w-[47px] shrink-0', !row.child && 'bg-[#747474]')}>
                        {(['eye', 'pointer', 'still'] as IconName[]).map(name => (
                            <span key={name} className="flex w-4 shrink-0 items-center justify-center border-l border-[#5c5c5c]">
                                {row.visible && (
                                    <button aria-label={`${row.label} ${name}`}>
                                        <Icon name={name} className={name === 'eye' ? 'size-2.5' : 'size-3'} />
                                    </button>
                                )}
                            </span>
                        ))}
                    </div>
                </li>
            ))}
        </ul>
        <div className="mx-[3px] mb-0.5 h-2.5 rounded-full border border-[#444] bg-[#5c5c5c]">
            <div className="h-full w-[84%] rounded-full border-r border-[#444] bg-linear-to-b from-[#949494] to-[#787878]" />
        </div>
        <Corner className="top-0 right-0" />
    </section>
);

const propertyTabs: IconName[] = ['stillSpark', 'renderLayers', 'scene', 'world', 'cubeOrange', 'chain', 'wrench', 'meshData', 'material', 'texture'];

const smallLabel = 'flex h-4 items-center pl-[5px] whitespace-nowrap';

const Properties = () => (
    <section className="relative min-h-0 flex-1 overflow-hidden bg-[#727272]">
        <div className={clsx('h-[21px] overflow-hidden border-t border-[#8a8a8a] pl-[7px]', barStyle)}>
            <EditorButton icon="properties" label="Editor type: Properties" />
            <div className="ml-[7px] flex">
                {propertyTabs.map((name, i) => (
                    <button key={name} aria-label={`${name} tab`} className={clsx('flex size-4 shrink-0 items-center justify-center border-y border-l border-[#1f1f1f]', i === 0 ? 'rounded-l bg-[#5680c2]' : 'bg-[#555]')}>
                        <Icon name={name} className="size-[13px]" />
                    </button>
                ))}
            </div>
        </div>
        <div className="flex h-7 items-center pt-px pl-2">
            <Icon name="pin" className="size-[13px]" />
            <Icon name="scene" className="ml-1 size-[13px]" />
            <span className="ml-[3px]">Scene</span>
        </div>
        <div className="mr-[3px] ml-1">
            <Panel title="Render" open>
                <div className="flex h-4 overflow-hidden rounded border border-[#2e2e2e]">
                    {([['stillSpark', 'Render'], ['clapper', 'Animation'], ['speaker', 'Audio']] as [IconName, string][]).map(([icon, label]) => (
                        <button key={label} className="flex flex-1 items-center border-l border-[#2e2e2e] bg-linear-to-b from-[#a2a2a2] to-[#8c8c8c] pl-0.5 first:border-l-0">
                            <Icon name={icon} className="size-[13px]" />
                            <span className="flex-1 text-center">{label}</span>
                        </button>
                    ))}
                </div>
                <div className="mt-1 flex items-center">
                    <span className="w-[66px] pl-[5px]">Display:</span>
                    <Select label="Display" value="Image Editor" rounded="rounded-l" className="flex-1" />
                    <IconButton icon="unlock" label="Lock interface" className={clsx('rounded-r border-l-0!', lightBox)} />
                </div>
            </Panel>
            <Panel title="Dimensions" open>
                <div className="flex">
                    <Select label="Render presets" value="Render Presets" rounded="rounded-l" className="flex-1" />
                    <IconButton icon="plus" label="Add preset" className={clsx('border-l-0!', lightBox)} />
                    <IconButton icon="minus" label="Remove preset" className={clsx('rounded-r border-l-0!', lightBox)} />
                </div>
                <div className="mt-1 grid grid-cols-2 gap-x-[7px]">
                    <div>
                        <p className={smallLabel}>Resolution:</p>
                        <div className="overflow-hidden rounded-lg border border-[#2e2e2e]">
                            <NumberField label="X:" value="1920 px" className="" />
                            <NumberField label="Y:" value="1080 px" className="border-y" />
                            <div className="relative h-3.5 bg-[#b4b4b4]">
                                <div className="h-full w-[53%] bg-[#7d7d7d]" />
                                <input aria-label="Resolution percentage" defaultValue="50%" className="absolute inset-0 w-full bg-transparent pr-[11px] text-right outline-none" />
                            </div>
                        </div>
                        <p className={smallLabel}>Aspect Ratio:</p>
                        <div className="overflow-hidden rounded-lg border border-[#2e2e2e]">
                            <NumberField label="X:" value="1.000" className="h-[15px]! border-b" />
                            <NumberField label="Y:" value="1.000" className="h-[15px]!" />
                        </div>
                        <div className="mt-0.5 flex justify-between pr-1 pl-0.5">
                            <Tick label="Bord" />
                            <Tick label="Crop" disabled />
                        </div>
                    </div>
                    <div>
                        <p className={smallLabel}>Frame Range:</p>
                        <div className="overflow-hidden rounded-lg border border-[#2e2e2e]">
                            <NumberField label="Start Frame:" value="1" className="" />
                            <NumberField label="End Frame:" value="250" className="border-y" />
                            <NumberField label="Frame Step:" value="1" className="h-3.5!" />
                        </div>
                        <p className={smallLabel}>Frame Rate:</p>
                        <Select label="Frame rate" value="24 fps" />
                        <p className={smallLabel}>Time Remapping:</p>
                        <div className="flex">
                            <NumberField label=":" value="100" className="flex-1 rounded-l-full border" />
                            <NumberField label=":" value="100" className="flex-1 rounded-r-full border border-l-0" />
                        </div>
                    </div>
                </div>
            </Panel>
            <Panel title="Anti-Aliasing" open checked>
                <div className="grid grid-cols-2 gap-x-[7px] gap-y-0.5">
                    <Segments items={['5', '8', '11', '16']} active="8" />
                    <Select label="Anti-aliasing filter" value="Mitchell-Netravali" />
                    <div className="pl-0.5"><Tick label="Full Sample" /></div>
                    <NumberField label="Size:" value="1.000 px" />
                </div>
            </Panel>
            <Panel title="Sampled Motion Blur" checked={false} />
            <Panel title="Shading" />
            <Panel title="Performance" />
            <Panel title="Post Processing" />
            <Panel title="Metadata" />
            <Panel title="Output" open>
                <div className="flex">
                    <input aria-label="Output path" defaultValue={'/tmp\\'} className={clsx('h-4 w-0 flex-1 rounded-l px-1 outline-none', fieldBox)} />
                    <IconButton icon="browse" label="Browse folder" className={clsx('rounded-r border-l-0!', lightBox)} />
                </div>
                <div className="mt-1 grid grid-cols-2 gap-x-[7px] gap-y-0.5 pl-0.5">
                    <Tick label="Overwrite" checked />
                    <Tick label="File Extensions" checked />
                    <Tick label="Placeholders" />
                    <Tick label="Cache Result" />
                </div>
                <div className="mt-1 grid grid-cols-2 gap-x-[7px]">
                    <Select label="File format" value="PNG" icon="image" />
                    <Segments items={['BW', 'RGB', 'RGBA']} active="RGBA" />
                </div>
                <div className="mt-0.5 flex items-center">
                    <span className="w-[67px] pl-[5px] whitespace-nowrap">Color Depth:</span>
                    <Segments items={['8', '16']} active="8" className="flex-1" />
                </div>
                <label className="relative mt-0.5 flex h-4 items-center overflow-hidden rounded-full border border-[#2e2e2e] bg-[#b0b0b0] pr-3 pl-2.5">
                    <span className="absolute inset-y-0 left-0 w-[18%] bg-[#7d7d7d]" />
                    <span className="relative">Compression:</span>
                    <input defaultValue="15%" className="relative w-0 flex-1 bg-transparent text-right outline-none" />
                </label>
            </Panel>
            <Panel title="Bake" />
            <Panel title="Freestyle" checked={false} />
        </div>
        <Corner className="top-0 right-0" />
        <Corner className="bottom-0 left-0" />
    </section>
);

const TitleBar = () => (
    <div className="flex h-4 shrink-0 items-center bg-[#3632b0] pl-0.5 text-white [font-family:'Open_Sans',sans-serif]">
        <Icon name="blender" className="size-[13px]" />
        <h1 className="ml-0.5 flex-1 text-[9px]">Blender</h1>
        <button aria-label="Minimize" className="flex w-9 justify-center">
            <svg viewBox="0 0 10 10" className="size-2.5"><path d="M1 5.500h8" stroke="#fff" /></svg>
        </button>
        <button aria-label="Restore" className="flex w-9 justify-center">
            <svg viewBox="0 0 10 10" className="size-2.5"><path d="M1.500 3.500h5v5h-5zM3.500 3V1.500h5v5H7" stroke="#fff" fill="none" /></svg>
        </button>
        <button aria-label="Close" className="flex w-9 justify-center">
            <svg viewBox="0 0 10 10" className="size-2.5"><path d="M1 1l8 8M9 1L1 9" stroke="#fff" /></svg>
        </button>
    </div>
);

export default function App() {
    return (
        <div className="flex h-screen flex-col overflow-hidden bg-[#393939] text-[9px] leading-3 text-[#0c0c0c] [font-family:'DejaVu_Sans_Condensed','DejaVu_Sans',sans-serif]">
            <TitleBar />
            <InfoHeader />
            <div className="flex min-h-0 flex-1">
                <div className="flex min-w-0 flex-1 flex-col">
                    <div className="flex min-h-0 flex-1">
                        <ToolShelf />
                        <Viewport />
                    </div>
                    <ViewHeader />
                    <Timeline />
                    <TimelineHeader />
                </div>
                <div className="flex w-[203px] shrink-0 flex-col border-l border-black">
                    <Outliner />
                    <Properties />
                </div>
            </div>
        </div>
    );
}
